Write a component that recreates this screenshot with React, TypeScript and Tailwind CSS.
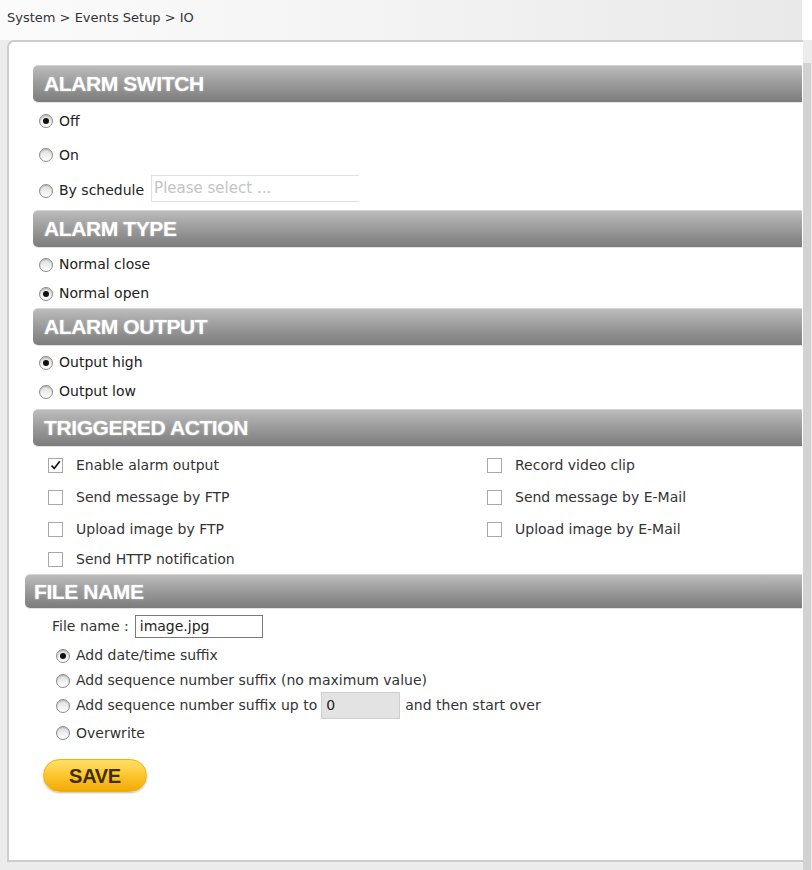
import type { ReactNode } from "react"

const font = { fontFamily: '"DejaVu Sans", Verdana, sans-serif' }

function Radio({ checked = false }: { checked?: boolean }) {
  return (
    <span className="flex h-[14px] w-[14px] shrink-0 items-center justify-center rounded-full border border-[#8c8c8c] bg-gradient-to-b from-[#dcdcdc] to-white shadow-[inset_0_1px_1px_rgba(0,0,0,0.2)]">
      {checked && <span className="h-[6px] w-[6px] rounded-full bg-[#111]" />}
    </span>
  )
}

function Checkbox({ checked = false }: { checked?: boolean }) {
  return (
    <span className="flex h-[15px] w-[15px] shrink-0 items-center justify-center border border-[#a8a8a8] bg-white">
      {checked && (
        <svg viewBox="0 0 15 15" className="h-[15px] w-[15px]">
          <path d="M3 7.5 L6 11 L12.5 2.5" fill="none" stroke="#111" strokeWidth="1.9" />
        </svg>
      )}
    </span>
  )
}

function Header({ children, wide = false }: { children: ReactNode; wide?: boolean }) {
  return (
    <div
      className={`flex items-center rounded-l-[5px] border-t border-[#d6d6d6] bg-gradient-to-b from-[#bcbcbc] via-[#9a9a9a] to-[#7c7c7c] shadow-[0_1px_0_#e2e2e2] ${
        wide ? "ml-[16px] h-[34px] pl-[9px]" : "ml-[24px] h-[37px] pl-[11px]"
      }`}
    >
      <span
        className="text-[21px] font-bold tracking-[-0.4px] text-white [text-shadow:0_0_2px_rgba(255,255,255,0.5)]"
        style={{ fontFamily: '"Liberation Sans", Arial, sans-serif' }}
      >
        {children}
      </span>
    </div>
  )
}

function RadioRow({ label, checked, h = "h-[29px]" }: { label: string; checked?: boolean; h?: string }) {
  return (
    <div className={`ml-[30px] flex items-center gap-[6px] ${h}`}>
      <Radio checked={checked} />
      <span className="text-[14px] text-[#222]">{label}</span>
    </div>
  )
}

function CheckRow({ label, checked, h = "h-[32px]" }: { label: string; checked?: boolean; h?: string }) {
  return (
    <div className={`flex items-center gap-[13px] ${h}`}>
      <Checkbox checked={checked} />
      <span className="text-[14px] text-[#333]">{label}</span>
    </div>
  )
}

function FileRadio({ checked, children, h = "h-[25px]" }: { checked?: boolean; children: ReactNode; h?: string }) {
  return (
    <div className={`ml-[47px] flex items-center gap-[6px] ${h}`}>
      <Radio checked={checked} />
      <div className="flex items-center text-[14px] text-[#333]">{children}</div>
    </div>
  )
}

export default function App() {
  return (
    <div className="flex h-[870px] w-[812px] flex-col overflow-hidden bg-white" style={font}>
      <div className="h-[40px] w-[802px] shrink-0 bg-gradient-to-r from-[#fbfbfb] via-[#f3f3f3] to-[#e9e9e9] pl-[7px] pt-[5px]">
        <span className="text-[13px] text-[#333]">System &gt; Events Setup &gt; IO</span>
      </div>

      <div className="flex min-h-0 flex-1 bg-[#ececec]">
        <div className="mb-[8px] ml-[7px] flex w-[796px] flex-col rounded-tl-[7px] border-b-2 border-l-2 border-t-2 border-[#cdcdcd] bg-white pt-[23px]">
          <div className="mr-[1px]">
            <Header>ALARM SWITCH</Header>
            <div className="pt-[2px]">
              <RadioRow label="Off" checked h="h-[34px]" />
              <RadioRow label="On" h="h-[34px]" />
              <div className="ml-[30px] flex h-[36px] items-end pb-[6px] pt-[3px]">
                <div className="flex items-center gap-[6px] pb-[1px]">
                  <Radio />
                  <span className="text-[14px] text-[#222]">By schedule</span>
                </div>
                <div className="ml-[7px] flex h-[27px] w-[208px] items-center border-y border-l border-[#e0e0e0] pl-[2px]">
                  <span className="text-[15px] text-[#c4c4c4]">Please select ...</span>
                </div>
              </div>
            </div>

            <div className="mt-[2px]">
              <Header>ALARM TYPE</Header>
            </div>
            <div className="pt-[3px]">
              <RadioRow label="Normal close" />
              <RadioRow label="Normal open" checked />
            </div>

            <Header>ALARM OUTPUT</Header>
            <div className="pb-[3px] pt-[3px]">
              <RadioRow label="Output high" checked />
              <RadioRow label="Output low" />
            </div>

            <Header>TRIGGERED ACTION</Header>
            <div className="flex pt-[3px]">
              <div className="ml-[39px] w-[439px]">
                <CheckRow label="Enable alarm output" checked />
                <CheckRow label="Send message by FTP" />
                <CheckRow label="Upload image by FTP" />
                <CheckRow label="Send HTTP notification" h="h-[29px]" />
              </div>
              <div>
                <CheckRow label="Record video clip" />
                <CheckRow label="Send message by E-Mail" />
                <CheckRow label="Upload image by E-Mail" />
              </div>
            </div>

            <Header wide>FILE NAME</Header>
            <div className="ml-[43px] flex items-center pt-[7px]">
              <span className="text-[14px] text-[#333]">File name :</span>
              <div className="ml-[6px] flex h-[23px] w-[128px] items-center border border-[#7a7a7a] px-[4px] text-[14px] text-[#222]">
                image.jpg
              </div>
            </div>
            <div className="mt-[5px]">
              <FileRadio checked>Add date/time suffix</FileRadio>
              <FileRadio>Add sequence number suffix (no maximum value)</FileRadio>
              <FileRadio>
                <span>Add sequence number suffix up to</span>
                <span className="ml-[4px] flex h-[27px] w-[79px] items-center border border-[#cfcfcf] bg-[#e3e3e3] px-[4px] text-[#222]">
                  0
                </span>
                <span className="ml-[5px]">and then start over</span>
              </FileRadio>
              <FileRadio h="h-[30px]">Overwrite</FileRadio>
            </div>

            <button
              type="button"
              className="ml-[34px] mt-[11px] flex h-[33px] w-[104px] items-center justify-center rounded-full border border-[#f0b400] bg-gradient-to-b from-[#ffe066] via-[#fcc52c] to-[#f2a900] shadow-[0_1px_2px_rgba(0,0,0,0.25)]"
            >
              <span
                className="text-[20px] font-bold tracking-[-0.3px] text-[#3f2d00]"
                style={{ fontFamily: '"Liberation Sans", Arial, sans-serif' }}
              >
                SAVE
              </span>
            </button>
          </div>
        </div>
        <div className="mt-[23px] w-[8px] shrink-0 self-stretch bg-[#d2d2d2]" />
      </div>
    </div>
  )
}
